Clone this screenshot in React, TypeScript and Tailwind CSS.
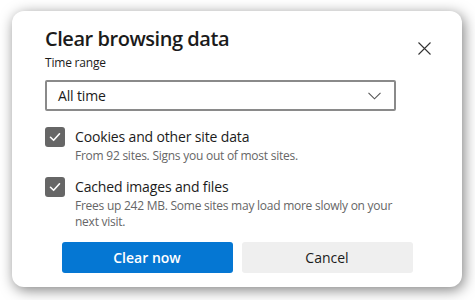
import React from 'react';

const font = { fontFamily: '"Open Sans", "Noto Sans", sans-serif' };

const Check: React.FC = () => (
  <div className="w-5 h-5 shrink-0 rounded-[3px] bg-[#666666] flex items-center justify-center">
    <svg width="14" height="14" viewBox="0 0 14 14" fill="none">
      <path d="M2.5 7.3L5.6 10.3L11.5 3.8" stroke="white" strokeWidth="1.6" strokeLinecap="round" strokeLinejoin="round" />
    </svg>
  </div>
);

const Option: React.FC<{ title: string; desc: string }> = ({ title, desc }) => (
  <div className="flex gap-[10px]">
    <Check />
    <div className="flex flex-col">
      <div className="text-[14px] leading-[20px] text-[#1b1b1b] tracking-[-0.15px]">{title}</div>
      <div className="mt-px text-[12px] leading-[16px] text-[#666666] w-[330px] tracking-[-0.25px]">{desc}</div>
    </div>
  </div>
);

export default function App() {
  return (
    <div className="w-[475px] h-[300px] bg-white pt-[11px] pl-[12px]" style={font}>
      <div className="relative w-[450px] h-[276px] rounded-[12px] bg-white shadow-[2px_3px_14px_rgba(0,0,0,0.5)] pt-[14px] px-[33px] flex flex-col">
        <button className="absolute top-[30px] right-[31px] w-[14px] h-[14px] flex items-center justify-center" aria-label="Close">
          <svg width="13" height="13" viewBox="0 0 13 13" fill="none">
            <path d="M0.5 0.5L12.5 12.5M12.5 0.5L0.5 12.5" stroke="#333" strokeWidth="1.1" />
          </svg>
        </button>
        <h1 className="text-[20px] leading-[28px] font-semibold text-[#1b1b1b] tracking-[-0.45px]">Clear browsing data</h1>
        <div className="mt-[2px] text-[12px] leading-[16px] text-[#1b1b1b] tracking-[-0.2px]">Time range</div>
        <div className="mt-[9px] w-[351px] h-[31px] border-2 border-[#8a8a8a] rounded-[2px] flex items-center justify-between pl-[11px] pr-[13px]">
          <span className="text-[14px] text-[#1b1b1b] tracking-[-0.15px]">All time</span>
          <svg width="13" height="8" viewBox="0 0 13 8" fill="none">
            <path d="M0.5 0.8L6.5 6.8L12.5 0.8" stroke="#555" strokeWidth="1.1" />
          </svg>
        </div>
        <div className="mt-[16px]">
          <Option title="Cookies and other site data" desc="From 92 sites. Signs you out of most sites." />
        </div>
        <div className="mt-[13px]">
          <Option title="Cached images and files" desc="Frees up 242 MB. Some sites may load more slowly on your next visit." />
        </div>
        <div className="mt-[12px] flex justify-center gap-[9px]">
          <button className="w-[171px] h-[31px] rounded-[3px] bg-[#0577d3] text-white text-[14px] font-semibold">Clear now</button>
          <button className="w-[171px] h-[31px] rounded-[3px] bg-[#efefef] text-[#1b1b1b] text-[14px]">Cancel</button>
        </div>
      </div>
    </div>
  );
}
